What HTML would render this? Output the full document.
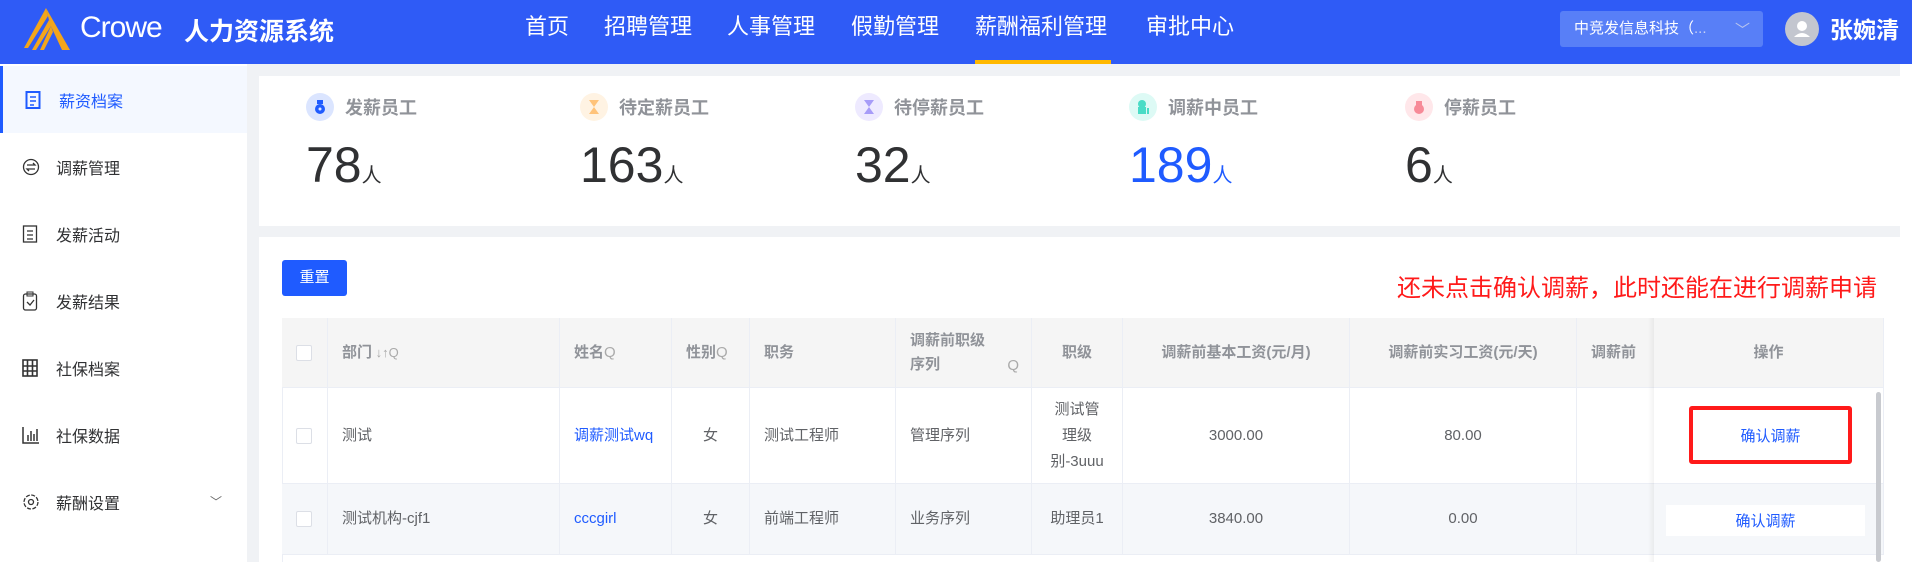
<!DOCTYPE html>
<html><head><meta charset="utf-8"><style>
*{margin:0;padding:0;box-sizing:border-box}
body{width:1912px;height:562px;overflow:hidden;background:#f0f2f5;font-family:"Liberation Sans","Noto Sans CJK SC",sans-serif;position:relative}
.abs{position:absolute}
.hdr{left:0;top:0;width:1912px;height:64px;background:#2f5bf6}
.nav{top:0;height:64px;line-height:54px;color:#fff;font-size:22px;white-space:nowrap}
.side{left:0;top:64px;width:247px;height:498px;background:#fff}
.mi{left:0;width:247px;height:67px;font-size:16px;color:#303133;display:flex;align-items:center;padding-left:56px}
.mi svg{position:absolute;left:22px}
.card{background:#fff}
.lab{font-size:18px;color:#909399;font-weight:bold;white-space:nowrap}
.num{font-size:50px;color:#303133;white-space:nowrap;line-height:1}
.num span{font-size:20px}
.ic{width:28px;height:28px;border-radius:50%}
.cell{position:absolute;border-right:1px solid #ebeef5;border-bottom:1px solid #ebeef5;font-size:15px;color:#606266;display:flex;align-items:center;padding:0 14px;line-height:26px}
.th{background:#f5f5f5;color:#909399;font-weight:bold}
.c{justify-content:center;text-align:center}
.cb{width:16px;height:16px;border:1px solid #dcdfe6;border-radius:2px;background:#fff}
.blue{color:#1f5bff}
</style></head><body>
<div class="abs hdr"></div>
<svg class="abs" style="left:22px;top:8px" width="50" height="44" viewBox="0 0 50 44"><path d="M24 0 L48 42 L40 42 L28 16 Z" fill="#f3a51b"/><path d="M24 0 L2 40 L6 40 L26 8Z" fill="#f3a51b"/><path d="M27 12 L10 42 L14 42 L29 18Z" fill="#f3a51b"/><path d="M29 18 L18 42 L22 42 L31 24Z" fill="#f3a51b"/></svg>
<div class="abs" style="left:80px;top:11px;font-size:30px;color:#fff;letter-spacing:-1px">Crowe</div>
<div class="abs" style="left:184px;top:12px;font-size:25px;color:#fff;font-weight:bold">人力资源系统</div>
<div class="abs nav" style="left:525px">首页</div>
<div class="abs nav" style="left:604px">招聘管理</div>
<div class="abs nav" style="left:727px">人事管理</div>
<div class="abs nav" style="left:851px">假勤管理</div>
<div class="abs nav" style="left:975px">薪酬福利管理</div>
<div class="abs" style="left:975px;top:60px;width:136px;height:4px;background:#ffb800"></div>
<div class="abs nav" style="left:1146px">审批中心</div>
<div class="abs" style="left:1560px;top:11px;width:203px;height:36px;background:#587ff7;border-radius:3px;color:#fff;font-size:15px;line-height:36px;padding-left:14px">中竞发信息科技（<span style="color:#c8d2f5">...</span><span style="position:absolute;left:175px;top:2px;color:#b8c4ee">﹀</span></div>
<div class="abs" style="left:1785px;top:12px;width:34px;height:34px;border-radius:50%;background:#c3c6cf"><svg width="34" height="34"><circle cx="17" cy="14" r="5" fill="#fff"/><path d="M9 25 Q17 17 25 25Z" fill="#fff"/></svg></div>
<div class="abs" style="left:1830px;top:11px;color:#fff;font-size:23px;font-weight:bold">张婉清</div>

<div class="abs side"></div>
<div class="abs mi" style="top:66px;background:#f4f8ff;border-left:3px solid #1f5bff;color:#1f5bff"><svg width="16" height="18"><rect x="1.5" y="1" width="13" height="16" fill="none" stroke="#1f5bff" stroke-width="2"/><path d="M5 6h6M5 10h6M5 14h4" stroke="#1f5bff" stroke-width="1.5"/></svg>薪资档案</div>
<div class="abs mi" style="top:133px"><svg width="18" height="18"><circle cx="9" cy="9" r="7.5" fill="none" stroke="#333" stroke-width="1.3"/><path d="M5 7h8l-2-2M13 11H5l2 2" fill="none" stroke="#333" stroke-width="1.3"/></svg>调薪管理</div>
<div class="abs mi" style="top:200px"><svg width="16" height="18"><rect x="1.5" y="1" width="13" height="16" fill="none" stroke="#333" stroke-width="1.3"/><path d="M5 6h6M5 10h6M5 14h6" stroke="#333" stroke-width="1.3"/></svg>发薪活动</div>
<div class="abs mi" style="top:267px"><svg width="16" height="20"><rect x="1.5" y="3" width="13" height="16" rx="2" fill="none" stroke="#333" stroke-width="1.3"/><path d="M5 1h6v4H5z" fill="none" stroke="#333"/><path d="M5 11l3 3 4-5" fill="none" stroke="#333" stroke-width="1.3"/></svg>发薪结果</div>
<div class="abs mi" style="top:334px"><svg width="16" height="18"><rect x="1" y="1" width="14" height="16" fill="none" stroke="#333" stroke-width="1.6"/><path d="M5.5 1v16M10.5 1v16M1 7h14M1 12h14" stroke="#333" stroke-width="1.6"/></svg>社保档案</div>
<div class="abs mi" style="top:401px"><svg width="18" height="18"><path d="M1 1v16h16" fill="none" stroke="#333" stroke-width="1.5"/><path d="M6 15V9M9 15V5M12 15V8M15 15V3" stroke="#333" stroke-width="1.5"/></svg>社保数据</div>
<div class="abs mi" style="top:468px"><svg width="18" height="18"><circle cx="9" cy="9" r="7" fill="none" stroke="#333" stroke-width="1.3" stroke-dasharray="4 1.5"/><circle cx="9" cy="9" r="2.5" fill="none" stroke="#333" stroke-width="1.3"/></svg>薪酬设置<span style="position:absolute;left:210px;color:#666;font-size:12px">﹀</span></div>

<div class="abs card" style="left:259px;top:76px;width:1641px;height:150px"></div>
<div class="abs" style="left:1900px;top:64px;width:12px;height:498px;background:#fff"></div>
<div class="abs ic" style="left:306px;top:93px;background:#dbe5ff"><svg width="28" height="28"><circle cx="14" cy="16" r="5" fill="#1f5bff"/><rect x="11" y="7" width="6" height="4" fill="#1f5bff"/><circle cx="14" cy="16" r="1.5" fill="#dbe5ff"/></svg></div>
<div class="abs lab" style="left:345px;top:94px">发薪员工</div>
<div class="abs num" style="left:306px;top:140px">78<span>人</span></div>
<div class="abs ic" style="left:580px;top:93px;background:#fff3e3"><svg width="28" height="28"><path d="M9 7h10l-5 7 5 7H9l5-7z" fill="#ffc37a"/></svg></div>
<div class="abs lab" style="left:619px;top:94px">待定薪员工</div>
<div class="abs num" style="left:580px;top:140px">163<span>人</span></div>
<div class="abs ic" style="left:855px;top:93px;background:#eeeaff"><svg width="28" height="28"><path d="M9 7h10l-5 7 5 7H9l5-7z" fill="#a79cf8"/></svg></div>
<div class="abs lab" style="left:894px;top:94px">待停薪员工</div>
<div class="abs num" style="left:855px;top:140px">32<span>人</span></div>
<div class="abs ic" style="left:1129px;top:93px;background:#ddfaf5"><svg width="28" height="28"><circle cx="13" cy="11" r="4" fill="#49dcc6"/><rect x="9" y="14" width="8" height="7" fill="#49dcc6"/><path d="M19 21v-6" stroke="#49dcc6" stroke-width="2"/></svg></div>
<div class="abs lab" style="left:1168px;top:94px">调薪中员工</div>
<div class="abs num" style="left:1129px;top:140px;color:#1f5bff">189<span>人</span></div>
<div class="abs ic" style="left:1405px;top:93px;background:#ffe7ea"><svg width="28" height="28"><circle cx="14" cy="16" r="5" fill="#f78a98"/><rect x="11" y="8" width="6" height="4" fill="#f78a98"/></svg></div>
<div class="abs lab" style="left:1444px;top:94px">停薪员工</div>
<div class="abs num" style="left:1405px;top:140px">6<span>人</span></div>

<div class="abs card" style="left:259px;top:237px;width:1641px;height:325px"></div>
<div class="abs" style="left:282px;top:260px;width:65px;height:36px;background:#1f5bff;border-radius:3px;color:#fff;font-size:15px;line-height:36px;text-align:center">重置</div>
<div class="abs" style="left:1397px;top:268px;color:#ff1a1a;font-size:24px;white-space:nowrap">还未点击确认调薪，此时还能在进行调薪申请</div>

<div class="abs" style="left:282px;top:318px;width:1602px;height:244px;border-left:1px solid #ebeef5;border-top:1px solid #ebeef5"></div>
<div class="cell th" style="left:282px;top:318px;width:46px;height:70px"><div class="cb" style="margin-left:0px"></div></div>
<div class="cell th" style="left:328px;top:318px;width:232px;height:70px">部门 <span style="font-weight:normal;font-size:13px;color:#aaa">&nbsp;↓↑Q</span></div>
<div class="cell th" style="left:560px;top:318px;width:112px;height:70px">姓名<span style="font-weight:normal;color:#aaa">Q</span></div>
<div class="cell th" style="left:672px;top:318px;width:78px;height:70px">性别<span style="font-weight:normal;color:#aaa">Q</span></div>
<div class="cell th" style="left:750px;top:318px;width:146px;height:70px">职务</div>
<div class="cell th" style="left:896px;top:318px;width:136px;height:70px;line-height:24px">调薪前职级<br>序列<span style="position:absolute;right:12px;top:36px;font-weight:normal;color:#aaa">Q</span></div>
<div class="cell th c" style="left:1032px;top:318px;width:91px;height:70px">职级</div>
<div class="cell th c" style="left:1123px;top:318px;width:227px;height:70px">调薪前基本工资(元/月)</div>
<div class="cell th c" style="left:1350px;top:318px;width:227px;height:70px">调薪前实习工资(元/天)</div>
<div class="cell th" style="left:1577px;top:318px;width:81px;height:70px;overflow:hidden;white-space:nowrap">调薪前</div>
<div class="cell" style="left:282px;top:388px;width:46px;height:96px"><div class="cb"></div></div>
<div class="cell" style="left:328px;top:388px;width:232px;height:96px">测试</div>
<div class="cell blue" style="left:560px;top:388px;width:112px;height:96px;white-space:nowrap">调薪测试wq</div>
<div class="cell c" style="left:672px;top:388px;width:78px;height:96px">女</div>
<div class="cell" style="left:750px;top:388px;width:146px;height:96px">测试工程师</div>
<div class="cell" style="left:896px;top:388px;width:136px;height:96px">管理序列</div>
<div class="cell c" style="left:1032px;top:388px;width:91px;height:96px">测试管<br>理级<br>别-3uuu</div>
<div class="cell c" style="left:1123px;top:388px;width:227px;height:96px">3000.00</div>
<div class="cell c" style="left:1350px;top:388px;width:227px;height:96px">80.00</div>
<div class="cell" style="left:1577px;top:388px;width:81px;height:96px"></div>
<div class="cell" style="left:282px;top:484px;width:46px;height:71px;background:#f5f7fa"><div class="cb"></div></div>
<div class="cell" style="left:328px;top:484px;width:232px;height:71px;background:#f5f7fa">测试机构-cjf1</div>
<div class="cell blue" style="left:560px;top:484px;width:112px;height:71px;background:#f5f7fa">cccgirl</div>
<div class="cell c" style="left:672px;top:484px;width:78px;height:71px;background:#f5f7fa">女</div>
<div class="cell" style="left:750px;top:484px;width:146px;height:71px;background:#f5f7fa">前端工程师</div>
<div class="cell" style="left:896px;top:484px;width:136px;height:71px;background:#f5f7fa">业务序列</div>
<div class="cell c" style="left:1032px;top:484px;width:91px;height:71px;background:#f5f7fa">助理员1</div>
<div class="cell c" style="left:1123px;top:484px;width:227px;height:71px;background:#f5f7fa">3840.00</div>
<div class="cell c" style="left:1350px;top:484px;width:227px;height:71px;background:#f5f7fa">0.00</div>
<div class="cell" style="left:1577px;top:484px;width:81px;height:71px;background:#f5f7fa"></div>
<div class="abs" style="left:1648px;top:318px;width:6px;height:244px;background:linear-gradient(to right,rgba(0,0,0,0),rgba(0,0,0,0.05))"></div>
<div class="cell th c" style="left:1654px;top:318px;width:230px;height:70px">操作</div>
<div class="cell c" style="left:1654px;top:388px;width:230px;height:96px;background:#fff"></div>
<div class="cell c" style="left:1654px;top:484px;width:230px;height:71px;background:#f5f7fa"></div>
<div class="abs" style="left:1689px;top:406px;width:163px;height:58px;border:4px solid #ff1a1a;border-radius:3px;color:#1f5bff;font-size:15px;display:flex;align-items:center;justify-content:center">确认调薪</div>
<div class="abs" style="left:1666px;top:505px;width:199px;height:31px;background:#fff;color:#1f5bff;font-size:15px;display:flex;align-items:center;justify-content:center">确认调薪</div>
<div class="abs" style="left:1876px;top:392px;width:5px;height:170px;background:#c8cacf;border-radius:3px"></div>
</body></html>
